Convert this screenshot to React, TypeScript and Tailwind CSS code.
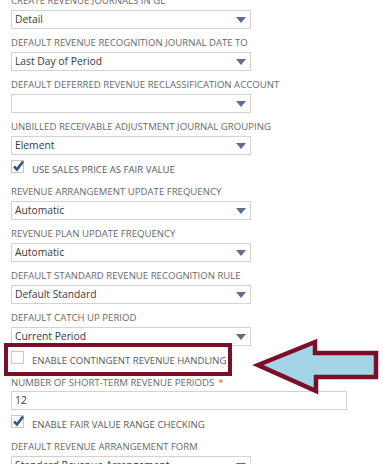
import React from "react";

const font = { fontFamily: '"Open Sans", "Liberation Sans", sans-serif' };

function Caret() {
  return (
    <svg width="10" height="6" viewBox="0 0 10 6" className="shrink-0">
      <path d="M0 0 L10 0 L5 6 Z" fill="#5d6d8a" />
    </svg>
  );
}

function Label({ text, required }: { text: string; required?: boolean }) {
  return (
    <div className="h-[14px] leading-[14px] text-[9.6px] uppercase text-[#6a6a6a] whitespace-nowrap">
      {text}
      {required && <span className="ml-1 text-[#e0632b]">*</span>}
    </div>
  );
}

function SelectField({ label, value }: { label: string; value: string }) {
  return (
    <div className="mt-[7px]">
      <Label text={label} />
      <div className="mt-[2px] h-[19px] w-[240px] border border-[#d2d2d2] bg-white flex items-center justify-between pl-[3px] pr-[4px]">
        <span className="text-[10.3px] text-[#3a3a3a] whitespace-nowrap">{value}</span>
        <Caret />
      </div>
    </div>
  );
}

function Checkbox({ label, checked }: { label: string; checked?: boolean }) {
  return (
    <div className="mt-[5px] h-[18px] flex items-start">
      <div className="relative w-[13px] h-[13px] border border-[#c8c8c8] bg-white shrink-0">
        {checked && (
          <svg width="13" height="12" viewBox="0 0 13 12" className="absolute left-[0px] -top-[1px]">
            <path d="M2 6.5 L5 9.5 L11 1.5" stroke="#34558b" strokeWidth="2.6" fill="none" />
          </svg>
        )}
      </div>
      <span className="ml-[8px] mt-[3px] text-[9.6px] uppercase text-[#5a5a5a] whitespace-nowrap leading-[14px]">
        {label}
      </span>
    </div>
  );
}

export default function App() {
  return (
    <div className="relative w-[383px] h-[464px] overflow-hidden bg-white" style={font}>
      <div className="pl-[11px] -mt-[13px]">
        <SelectField label="Create Revenue Journals in GL" value="Detail" />
        <SelectField label="Default Revenue Recognition Journal Date To" value="Last Day of Period" />
        <SelectField label="Default Deferred Revenue Reclassification Account" value="" />
        <SelectField label="Unbilled Receivable Adjustment Journal Grouping" value="Element" />
        <Checkbox label="Use Sales Price as Fair Value" checked />
        <SelectField label="Revenue Arrangement Update Frequency" value="Automatic" />
        <SelectField label="Revenue Plan Update Frequency" value="Automatic" />
        <SelectField label="Default Standard Revenue Recognition Rule" value="Default Standard" />
        <SelectField label="Default Catch Up Period" value="Current Period" />
        <Checkbox label="Enable Contingent Revenue Handling" />
        <div className="mt-[7px]">
          <Label text="Number of Short-Term Revenue Periods" required />
          <div className="mt-[1px] h-[19px] w-[336px] border border-[#d2d2d2] bg-white flex items-center pl-[3px]">
            <span className="text-[10.3px] text-[#3a3a3a]">12</span>
          </div>
        </div>
        <Checkbox label="Enable Fair Value Range Checking" checked />
        <SelectField label="Default Revenue Arrangement Form" value="Standard Revenue Arrangement" />
      </div>

      {/* annotation: highlight box */}
      <div className="absolute left-[4px] top-[343px] w-[228px] h-[33px] border-4 border-[#7b0f25]" />

      {/* annotation: arrow */}
      <svg className="absolute left-0 top-0" width="383" height="464" viewBox="0 0 383 464">
        <polygon
          points="258,365 315,342 315,353 376,353 376,377 316,377 316,391"
          fill="#a3d5e7"
          stroke="#7b0f25"
          strokeWidth="4.5"
          strokeLinejoin="miter"
        />
      </svg>
    </div>
  );
}
